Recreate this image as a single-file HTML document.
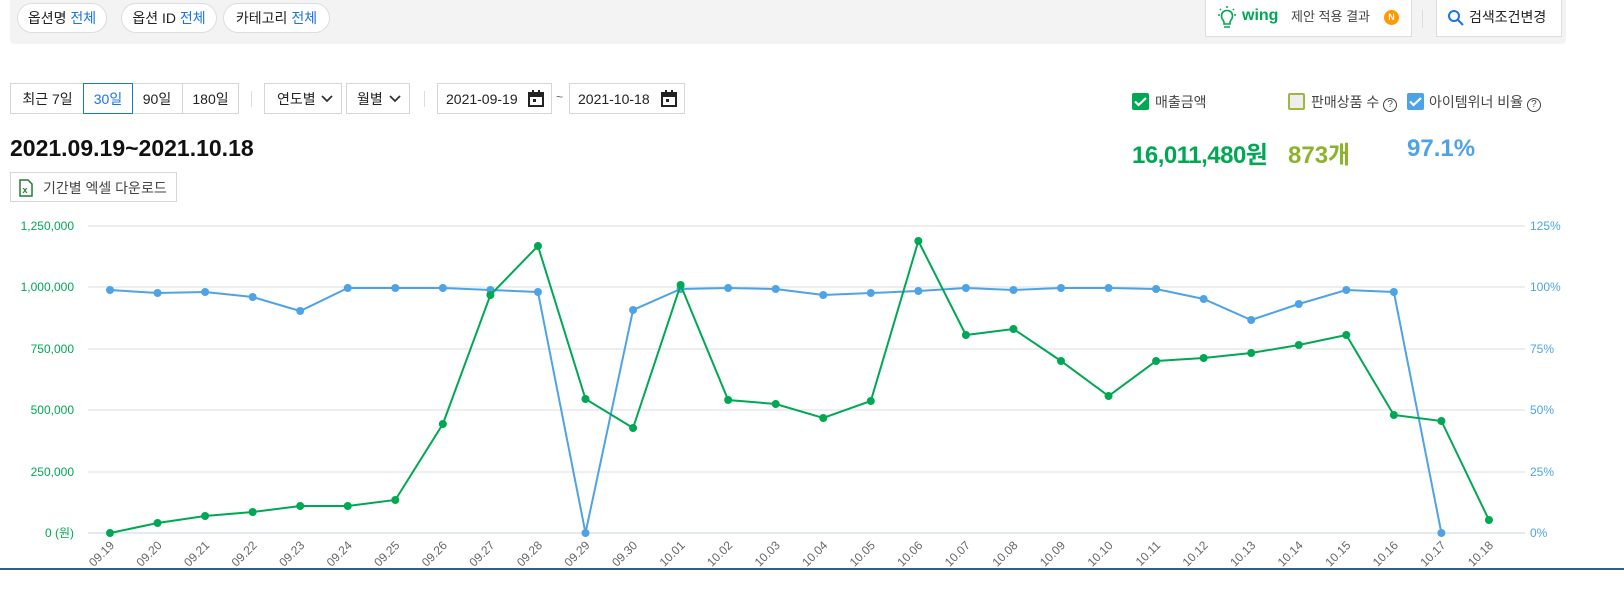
<!DOCTYPE html>
<html><head><meta charset="utf-8"><style>
body{margin:0;width:1624px;height:591px;overflow:hidden;background:#fff;font-family:"Liberation Sans","Noto Sans CJK KR",sans-serif;color:#222;position:relative}
.abs{position:absolute}
.bar{left:10px;top:0;width:1556px;height:44px;background:#f3f3f3;border-radius:0 0 4px 4px}
.pill{top:3px;height:28px;border:1px solid #ddd;border-radius:15px;background:#fff;font-size:14px;line-height:28px;text-align:center}
.pill b{font-weight:normal;color:#1a73e8}
.box{border:1px solid #d6d6d6;background:#fff;font-size:14px;line-height:30px;height:31px;box-sizing:border-box;text-align:center}
.cb{width:17px;height:17px;border-radius:2px;top:93px}
</style></head><body>
<div class="abs bar"></div>
<div class="abs pill" style="left:17px;width:88px">옵션명 <b>전체</b></div>
<div class="abs pill" style="left:121px;width:94px">옵션 ID <b>전체</b></div>
<div class="abs pill" style="left:223px;width:105px">카테고리 <b>전체</b></div>
<div class="abs" style="left:1205px;top:0;width:205px;height:36px;background:#fff;border:1px solid #ddd;border-top:none;font-size:13px;line-height:34px">
<svg class="abs" style="left:10px;top:6px" width="22" height="24" viewBox="0 0 22 24"><path d="M7 14c-2-2-2-6 0-8s6-2 8 0 2 6 0 8l-1 2v2H8v-2z" fill="none" stroke="#00a854" stroke-width="1.6"/><path d="M8 21h6M2 9h2M18 9h2M4 3l1 1M18 3l-1 1M11 0v2" stroke="#00a854" stroke-width="1.5"/></svg>
<span class="abs" style="left:36px;color:#00a854;font-weight:bold;font-size:16px;top:-1px">wing</span>
<span class="abs" style="left:85px;color:#444">제안 적용 결과</span>
<span class="abs" style="left:178px;top:10px;width:15px;height:15px;border-radius:50%;background:#f90;color:#fff;font-size:9px;line-height:15px;text-align:center;font-weight:bold">N</span>
</div>
<div class="abs" style="left:1422px;top:10px;width:1px;height:18px;background:#ddd"></div>
<div class="abs" style="left:1436px;top:0;width:124px;height:36px;background:#fff;border:1px solid #ddd;border-top:none;font-size:14px;line-height:34px">
<svg class="abs" style="left:10px;top:9px" width="17" height="17"><circle cx="7" cy="7" r="5" fill="none" stroke="#1a73e8" stroke-width="2"/><path d="M11 11l5 5" stroke="#1a73e8" stroke-width="2"/></svg>
<span class="abs" style="left:32px">검색조건변경</span></div>

<div class="abs box" style="left:10px;top:83px;width:74px;border-right:none">최근 7일</div>
<div class="abs box" style="left:132px;top:83px;width:51px;border-left:none">90일</div>
<div class="abs box" style="left:182px;top:83px;width:57px">180일</div>
<div class="abs box" style="left:83px;top:83px;width:50px;border-color:#1a73e8;color:#1a73e8">30일</div>
<div class="abs" style="left:251px;top:91px;width:1px;height:16px;background:#ddd"></div>
<div class="abs box" style="left:264px;top:83px;width:78px;text-align:left;padding-left:12px">연도별<svg class="abs" style="left:56px;top:11px" width="12" height="8"><path d="M1 1l5 5 5-5" fill="none" stroke="#333" stroke-width="1.8"/></svg></div>
<div class="abs box" style="left:346px;top:83px;width:64px;text-align:left;padding-left:10px">월별<svg class="abs" style="left:42px;top:11px" width="12" height="8"><path d="M1 1l5 5 5-5" fill="none" stroke="#333" stroke-width="1.8"/></svg></div>
<div class="abs" style="left:424px;top:91px;width:1px;height:16px;background:#ddd"></div>
<div class="abs box" style="left:437px;top:83px;width:115px;text-align:left;padding-left:8px">2021-09-19<svg class="abs" style="left:90px;top:6px" width="16" height="17"><rect x="1" y="3" width="14" height="13" fill="none" stroke="#222" stroke-width="2"/><rect x="1" y="3" width="14" height="4" fill="#222"/><rect x="4" y="0" width="2" height="4" fill="#222"/><rect x="10" y="0" width="2" height="4" fill="#222"/><rect x="5" y="9" width="3" height="3" fill="#222"/></svg></div>
<div class="abs" style="left:556px;top:90px;font-size:12px;color:#666">~</div>
<div class="abs box" style="left:569px;top:83px;width:116px;text-align:left;padding-left:8px">2021-10-18<svg class="abs" style="left:91px;top:6px" width="16" height="17"><rect x="1" y="3" width="14" height="13" fill="none" stroke="#222" stroke-width="2"/><rect x="1" y="3" width="14" height="4" fill="#222"/><rect x="4" y="0" width="2" height="4" fill="#222"/><rect x="10" y="0" width="2" height="4" fill="#222"/><rect x="5" y="9" width="3" height="3" fill="#222"/></svg></div>

<div class="abs" style="left:10px;top:135px;font-size:23px;font-weight:bold;color:#111">2021.09.19~2021.10.18</div>
<div class="abs box" style="left:10px;top:172px;width:167px;height:30px;text-align:left;padding-left:32px;color:#444">기간별 엑셀 다운로드
<svg class="abs" style="left:8px;top:6px" width="14" height="18"><path d="M1 1h8l4 4v12H1z" fill="#fff" stroke="#1e7e34" stroke-width="1.5"/><text x="3.5" y="14" font-size="9" font-weight="bold" fill="#1e7e34" font-family="Liberation Sans">x</text></svg></div>

<div class="abs cb" style="left:1132px;background:#00a854"><svg width="17" height="17"><path d="M3 8.5l3.5 3.5L14 5" stroke="#fff" stroke-width="2.2" fill="none"/></svg></div>
<div class="abs" style="left:1155px;top:92px;font-size:14px;color:#444">매출금액</div>
<div class="abs cb" style="left:1288px;background:#eee;border:2px solid #9bba3a;box-sizing:border-box"></div>
<div class="abs" style="left:1311px;top:92px;font-size:14px;color:#444">판매상품 수 <span style="display:inline-block;width:12px;height:12px;border:1.5px solid #444;border-radius:50%;font-size:10px;line-height:12px;text-align:center">?</span></div>
<div class="abs cb" style="left:1407px;background:#4ea3e6"><svg width="17" height="17"><path d="M3 8.5l3.5 3.5L14 5" stroke="#fff" stroke-width="2.2" fill="none"/></svg></div>
<div class="abs" style="left:1429px;top:92px;font-size:14px;color:#444">아이템위너 비율 <span style="display:inline-block;width:12px;height:12px;border:1.5px solid #444;border-radius:50%;font-size:10px;line-height:12px;text-align:center">?</span></div>
<div class="abs" style="left:1132px;top:135px;font-size:24px;font-weight:bold;color:#00a854;letter-spacing:-0.5px">16,011,480원</div>
<div class="abs" style="left:1288px;top:135px;font-size:24px;font-weight:bold;color:#8db32e">873개</div>
<div class="abs" style="left:1407px;top:135px;font-size:24px;font-weight:bold;color:#4ea3e6">97.1%</div>

<svg class="abs" style="left:0;top:0" width="1624" height="591">
<g stroke="#ddd" stroke-width="1">
<line x1="88" y1="226" x2="1525" y2="226"/><line x1="88" y1="287" x2="1525" y2="287"/><line x1="88" y1="349" x2="1525" y2="349"/><line x1="88" y1="410" x2="1525" y2="410"/><line x1="88" y1="472" x2="1525" y2="472"/></g>
<line x1="88" y1="533" x2="1525" y2="533" stroke="#c5d5ea"/>
<g font-family="Liberation Sans, Noto Sans CJK KR, sans-serif" font-size="12" fill="#00a854" text-anchor="end">
<text x="74" y="230">1,250,000</text><text x="74" y="291">1,000,000</text><text x="74" y="353">750,000</text><text x="74" y="414">500,000</text><text x="74" y="476">250,000</text><text x="74" y="537">0 (원)</text></g>
<g font-family="Liberation Sans, sans-serif" font-size="12" fill="#4ea3e6">
<text x="1530" y="230">125%</text><text x="1530" y="291">100%</text><text x="1530" y="353">75%</text><text x="1530" y="414">50%</text><text x="1530" y="476">25%</text><text x="1530" y="537">0%</text></g>
<g id="ch"></g>
<rect x="0" y="568" width="1624" height="23" fill="#fff"/>
<line x1="0" y1="569" x2="1624" y2="569" stroke="#3b5b85" stroke-width="2"/>
</svg>
<script>
var g=[533,523,516,512,506,506,500,424,295,246,399,428,285,400,404,418,401,241,335,329,361,396,361,358,353,345,335,415,421,520];
var b=[290,293,292,297,311,288,288,288,290,292,533,310,289,288,289,295,293,291,288,290,288,288,289,299,320,304,290,292,533];
var days=[];for(var i=19;i<=30;i++)days.push("09."+i);for(i=1;i<=18;i++)days.push("10."+(i<10?"0"+i:i));
var s="",x=function(i){return 110+i*47.55};
function line(a,c){var p=a.map(function(y,i){return x(i)+","+y}).join(" ");s+='<polyline points="'+p+'" fill="none" stroke="'+c+'" stroke-width="2"/>';a.forEach(function(y,i){s+='<circle cx="'+x(i)+'" cy="'+y+'" r="4" fill="'+c+'"/>'})}
line(b,"#4ea3e6");line(g,"#00a854");
days.forEach(function(d,i){var X=x(i)+5,Y=546;s+='<text x="'+X+'" y="'+Y+'" transform="rotate(-45 '+X+' '+Y+')" text-anchor="end" font-size="12" fill="#666" font-family="Liberation Sans,sans-serif">'+d+'</text>'});
document.getElementById("ch").innerHTML=s;
</script>
</body></html>
